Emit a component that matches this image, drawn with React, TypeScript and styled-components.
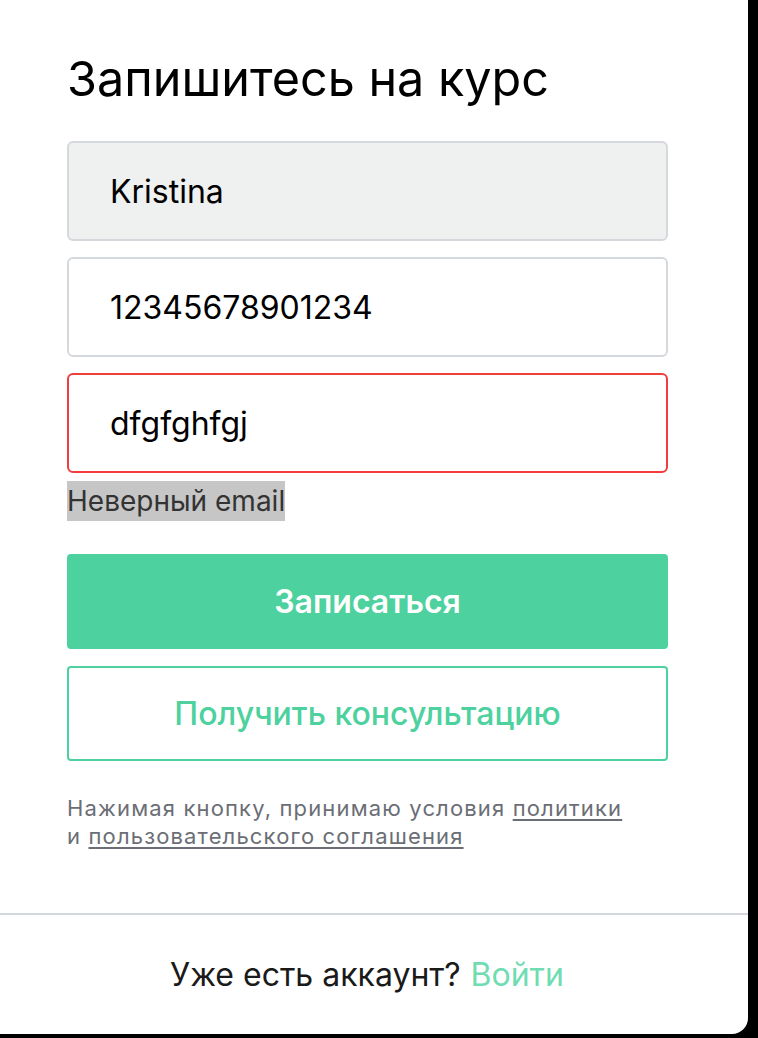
import React from "react";
import styled, { createGlobalStyle } from "styled-components";

const Global = createGlobalStyle`
  html, body { margin: 0; padding: 0; background: #000; }
  body { font-family: Inter, "Noto Sans", sans-serif; }
  * { box-sizing: border-box; }
`;

const Card = styled.div`
  width: 748px;
  height: 1034px;
  background: #fff;
  border-radius: 0 0 16px 0;
  display: flex;
  flex-direction: column;
`;

const Body = styled.div`
  padding: 50px 80px 0 67px;
  display: flex;
  flex-direction: column;
  flex: 1;
`;

const Title = styled.h1`
  margin: 0 0 33px;
  font-size: 48.5px;
  line-height: 58px;
  font-weight: 400;
  color: #000;
  letter-spacing: 0;
`;

const Fields = styled.div`
  display: flex;
  flex-direction: column;
  gap: 16px;
`;

const Input = styled.input<{ $error?: boolean; $filled?: boolean }>`
  width: 601px;
  height: 100px;
  border: 2px solid ${(p) => (p.$error ? "#f23d3d" : "#d5d8dc")};
  border-radius: 6px;
  background: ${(p) => (p.$filled ? "#eff0f0" : "#fff")};
  padding: 0 41px;
  font-family: Inter, sans-serif;
  font-size: 32px;
  color: #000;
  outline: none;
`;

const ErrorRow = styled.div`
  margin-top: 8px;
  height: 40px;
`;

const ErrorText = styled.span`
  display: inline-block;
  background: #c6c6c6;
  color: #333;
  font-size: 28px;
  line-height: 40px;
`;

const Buttons = styled.div`
  margin-top: 33px;
  display: flex;
  flex-direction: column;
  gap: 17px;
`;

const Button = styled.button<{ $outline?: boolean }>`
  width: 601px;
  height: 95px;
  border-radius: 4px;
  border: 2px solid #4dd19e;
  background: ${(p) => (p.$outline ? "#fff" : "#4dd19e")};
  color: ${(p) => (p.$outline ? "#4dd19e" : "#fff")};
  font-family: Inter, sans-serif;
  font-size: 32px;
  font-weight: ${(p) => (p.$outline ? 500 : 600)};
  cursor: pointer;
`;

const Legal = styled.p`
  margin: 33px 0 0;
  font-size: 22px;
  line-height: 28px;
  letter-spacing: 1.15px;
  color: #6b6e75;
`;

const Link = styled.a`
  color: #6b6e75;
  text-decoration: underline;
  text-underline-offset: 3px;
`;

const Divider = styled.hr`
  margin: 0;
  border: none;
  border-top: 2px solid #d3d6da;
`;

const Footer = styled.div`
  height: 119px;
  display: flex;
  align-items: center;
  justify-content: center;
  padding-right: 14px;
  font-size: 32px;
  color: #1a1a1a;
`;

const Accent = styled.a`
  color: #6fdcb2;
  text-decoration: none;
  margin-left: 10px;
`;

export default function App() {
  return (
    <>
      <Global />
      <Card>
        <Body>
          <Title>Запишитесь на курс</Title>
          <Fields>
            <Input $filled defaultValue="Kristina" />
            <Input defaultValue="12345678901234" />
            <Input $error defaultValue="dfgfghfgj" />
          </Fields>
          <ErrorRow>
            <ErrorText>Неверный email</ErrorText>
          </ErrorRow>
          <Buttons>
            <Button>Записаться</Button>
            <Button $outline>Получить консультацию</Button>
          </Buttons>
          <Legal>
            Нажимая кнопку, принимаю условия <Link>политики</Link>
            <br />и <Link>пользовательского соглашения</Link>
          </Legal>
        </Body>
        <Divider />
        <Footer>
          Уже есть аккаунт?<Accent>Войти</Accent>
        </Footer>
      </Card>
    </>
  );
}
